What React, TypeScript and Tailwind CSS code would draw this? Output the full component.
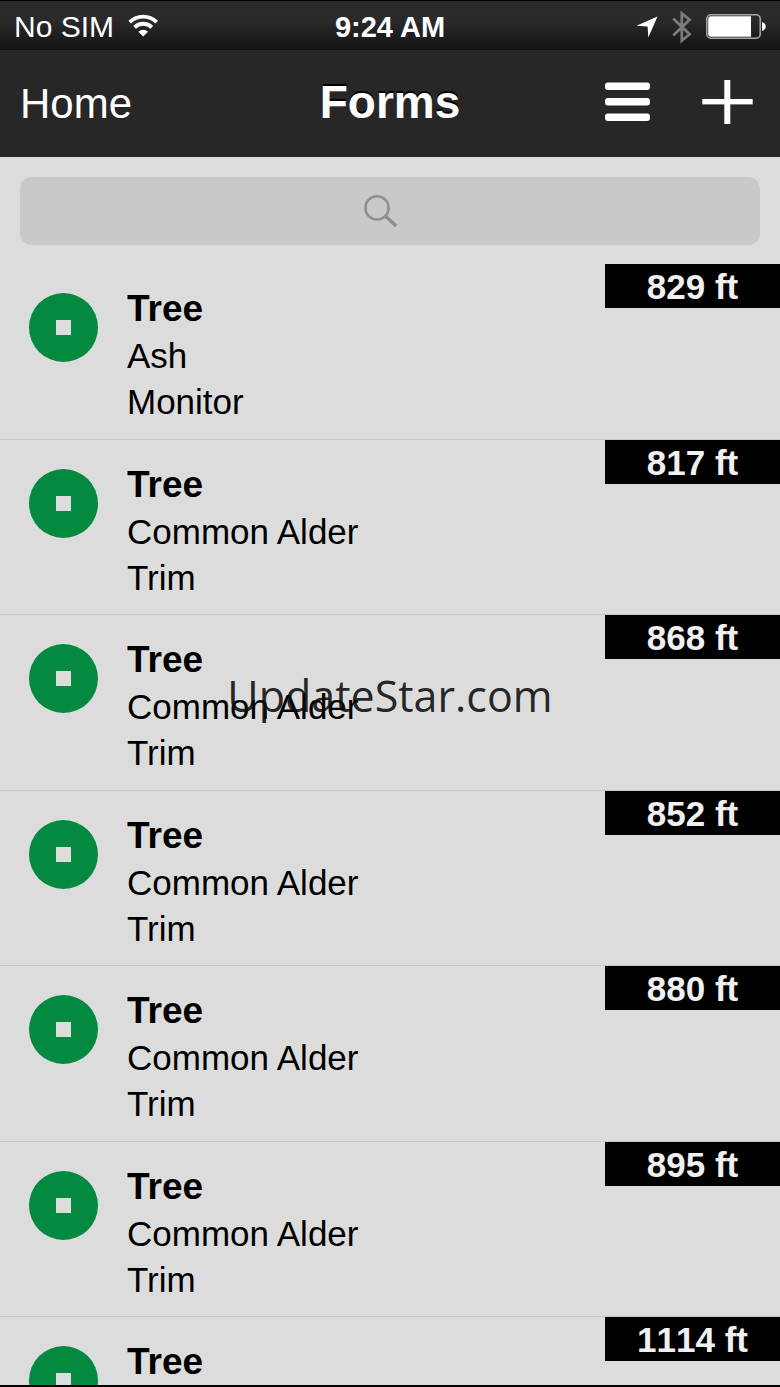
type Form = {
  title: string;
  species: string;
  action: string;
  distance: string;
};

const forms: Form[] = [
  { title: "Tree", species: "Ash", action: "Monitor", distance: "829 ft" },
  { title: "Tree", species: "Common Alder", action: "Trim", distance: "817 ft" },
  { title: "Tree", species: "Common Alder", action: "Trim", distance: "868 ft" },
  { title: "Tree", species: "Common Alder", action: "Trim", distance: "852 ft" },
  { title: "Tree", species: "Common Alder", action: "Trim", distance: "880 ft" },
  { title: "Tree", species: "Common Alder", action: "Trim", distance: "895 ft" },
  { title: "Tree", species: "Common Alder", action: "Trim", distance: "1114 ft" },
];

function StatusBar() {
  return (
    <div className="grid h-[50px] shrink-0 grid-cols-[1fr_auto_1fr] items-center border-t border-black bg-linear-to-b from-[#2a2a2a] from-40% to-[#141414] px-3.5 pt-0.5 text-white">
      <div className="flex items-center gap-3.5">
        <span className="text-[30px] leading-[36px]">No SIM</span>
        <svg className="mb-0.5" width="31" height="23" viewBox="0 0 31 23" fill="none" stroke="#fff" strokeWidth="3.8">
          <path d="M1.7 8.2a19.2 19.2 0 0 1 27 0" />
          <path d="M6.6 13.3a12.2 12.2 0 0 1 17.2 0" />
          <path d="M15.2 22.6L10.4 17.7a6.6 6.6 0 0 1 9.6 0z" fill="#fff" stroke="none" />
        </svg>
      </div>
      <span className="text-[29px] font-bold leading-[36px]">9:24 AM</span>
      <div className="flex items-center justify-end">
        <svg width="22" height="22" viewBox="0 0 22 22" fill="#fff">
          <path d="M21.5 0.5L12.3 21.5L11.6 10.4L0.5 9.7z" />
        </svg>
        <svg className="mx-3.5" width="20" height="34" viewBox="0 0 20 34" fill="none" stroke="#7c7c7c" strokeWidth="2.7">
          <path d="M1.2 8.6L17.6 24.2L9.8 30.6V3.4L17.6 9.8L1.2 25.4" />
        </svg>
        <svg width="60" height="25" viewBox="0 0 60 25" fill="none">
          <rect x="0.8" y="0.8" width="53.4" height="23.4" rx="4" stroke="#a8a8a8" strokeWidth="1.5" />
          <path d="M5 2.2H45V22.8H5a2.8 2.8 0 0 1-2.8-2.8V5A2.8 2.8 0 0 1 5 2.2z" fill="#fff" />
          <path d="M56 8c5 1.5 5 7.5 0 9z" fill="#fff" />
        </svg>
      </div>
    </div>
  );
}

function Header() {
  return (
    <header className="grid h-[107px] shrink-0 grid-cols-[1fr_auto_1fr] items-center bg-[#272727] px-5 pb-1 text-white">
      <a href="#home" className="mt-1 justify-self-start text-[42px] leading-[48px]">
        Home
      </a>
      <h1 className="text-[46px] font-bold leading-[48px] [text-shadow:0_-2px_0_#000]">Forms</h1>
      <div className="flex items-center justify-end gap-[52px] pr-[7px]">
        <button type="button" aria-label="Menu" className="cursor-pointer">
          <svg width="45" height="40" viewBox="0 0 45 40" fill="#fff">
            <rect x="0" y="0.5" width="45" height="7.6" rx="3" />
            <rect x="0" y="16" width="45" height="7.6" rx="3" />
            <rect x="0" y="31.5" width="45" height="7.6" rx="3" />
          </svg>
        </button>
        <button type="button" aria-label="Add form" className="cursor-pointer">
          <svg width="51" height="44" viewBox="0 0 51 44" fill="#fff">
            <rect x="22.3" y="0" width="6" height="44" />
            <rect x="0.3" y="19" width="50.4" height="5.4" />
          </svg>
        </button>
      </div>
    </header>
  );
}

function Search() {
  return (
    <div className="shrink-0 px-5 pb-[19px] pt-5">
      <div className="relative">
        <input
          type="search"
          aria-label="Search forms"
          className="block h-[68px] w-full rounded-xl bg-[#c8c9ca] px-6 text-center text-[35px] outline-none"
        />
        <div className="pointer-events-none absolute inset-0 flex items-center justify-center pr-[18px]">
          <svg width="34" height="32" viewBox="0 0 34 32" fill="none" stroke="#8e8f90">
            <circle cx="13" cy="12.9" r="11.6" strokeWidth="2.5" />
            <path d="M21.3 21L32.2 31" strokeWidth="3.6" />
          </svg>
        </div>
      </div>
    </div>
  );
}

function FormRow({ form }: { form: Form }) {
  return (
    <li className="flex h-[175px] items-start border-b border-[#c6c6c6] pl-[29px] odd:h-[176px]">
      <div className="mt-[29px] flex size-[69px] shrink-0 items-center justify-center rounded-full bg-[#048a40]">
        <div className="size-[15px] bg-[#dcdcdc]" />
      </div>
      <div className="ml-[29px] pt-[21px]">
        <h2 className="text-[37px] font-bold leading-[48px]">{form.title}</h2>
        <p className="text-[35px] leading-[46px]">{form.species}</p>
        <p className="text-[35px] leading-[46px]">{form.action}</p>
      </div>
      <span className="ml-auto h-11 w-[175px] bg-black text-center text-[35px] font-bold leading-[46px] text-[#f0f0f0] [font-kerning:none]">
        {form.distance}
      </span>
    </li>
  );
}

export default function App() {
  return (
    <div className="relative flex h-screen flex-col overflow-hidden border-b-2 border-black bg-[#dcdcdc] font-['Liberation_Sans',Arial,sans-serif] text-black">
      <StatusBar />
      <Header />
      <Search />
      <ul className="min-h-0 flex-1 overflow-hidden">
        {forms.map((form) => (
          <FormRow key={form.distance} form={form} />
        ))}
      </ul>
      {/* watermark */}
      <div className="pointer-events-none absolute inset-0 flex items-center justify-center pt-2 font-['Open_Sans','Noto_Sans',sans-serif] text-[43px] text-[#0c0c0c]/90">
        UpdateStar.com
      </div>
    </div>
  );
}
